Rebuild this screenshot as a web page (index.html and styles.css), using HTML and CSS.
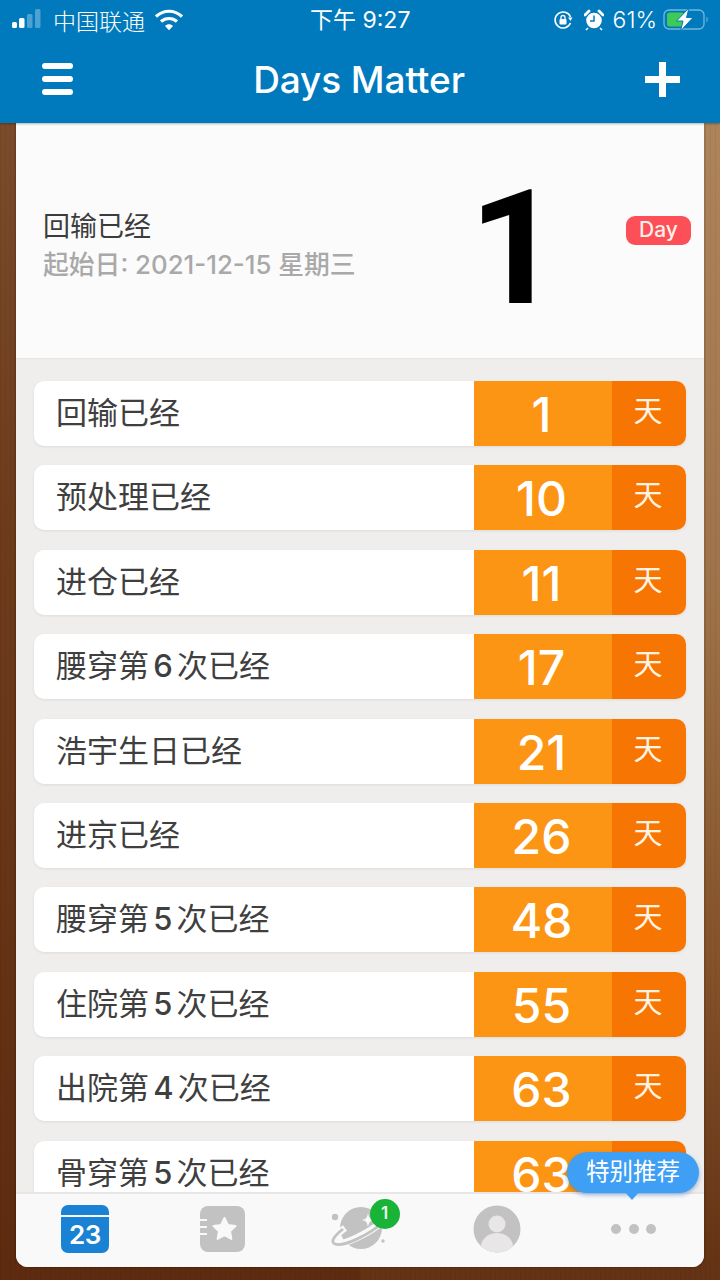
FILE: index.html
```html
<!DOCTYPE html>
<html lang="zh">
<head>
<meta charset="utf-8">
<title>Days Matter</title>
<link rel="stylesheet" href="styles.css">
</head>
<body>
<header class="top">
  <div class="status">
    <div class="status-left">
      <svg class="signal" width="34" height="24" viewBox="0 0 34 24"><rect x="0" y="14" width="5" height="6" rx="1.5" fill="#fff"/><rect x="7" y="10" width="5.5" height="10" rx="1.5" fill="#fff"/><rect x="15" y="6" width="5.5" height="14" rx="1.5" fill="#fff" opacity=".3"/><rect x="23" y="1" width="5.5" height="19" rx="1.5" fill="#fff" opacity=".3"/></svg>
      <span class="carrier">中国联通</span>
      <svg class="wifi" width="28" height="22" viewBox="0 0 28 22"><path d="M1 7.500C8.500 .5 19.500 .5 27 7.500" fill="none" stroke="#fff" stroke-width="3.2"/><path d="M6 12.500C10.500 8.500 17.500 8.500 22 12.500" fill="none" stroke="#fff" stroke-width="3.2"/><path d="M10 17c2.200-2.400 5.800-2.400 8 0l-4 4.200z" fill="#fff"/></svg>
    </div>
    <span class="clock">下午 9:27</span>
    <div class="status-right">
      <svg class="ic-lock" width="20" height="20" viewBox="0 0 20 20"><path d="M17.500 7A8 8 0 1 0 17.500 13" fill="none" stroke="#fff" stroke-width="1.600"/><path d="M15 7.500h4.500L17.500 11z" fill="#fff"/><rect x="6.500" y="9" width="7" height="5.500" rx="1" fill="#fff"/><path d="M8 9V7.500a2 2 0 0 1 4 0V9" fill="none" stroke="#fff" stroke-width="1.300"/></svg>
      <svg class="ic-alarm" width="20" height="22" viewBox="0 0 20 22"><circle cx="10" cy="11.500" r="7.800" fill="#fff"/><path d="M10 6.500v5.500H6" fill="none" stroke="#007abd" stroke-width="1.500"/><path d="M1 6l4-4M19 6l-4-4" stroke="#fff" stroke-width="2.800" stroke-linecap="round"/><path d="M4 19l-2 2M16 19l2 2" stroke="#fff" stroke-width="1.500"/></svg>
      <span class="percent">61%</span>
      <svg class="battery" width="46" height="24" viewBox="0 0 46 24"><rect x="1" y="2" width="40" height="19" rx="5" fill="none" stroke="#fff" stroke-opacity=".45" stroke-width="1.300"/><path d="M43.500 8.500c1.500.5 1.500 5.500 0 6z" fill="#fff" opacity=".45"/><rect x="4" y="4.500" width="17" height="14" rx="2.500" fill="#3ecb55"/><path d="M26 0L13.500 13H20l-2.500 10L30 9.500h-6.500z" fill="#fff" stroke="#007abd" stroke-width="1"/></svg>
    </div>
  </div>
  <nav class="nav">
    <div class="burger"><i></i><i></i><i></i></div>
    <h1 class="title">Days Matter</h1>
    <div class="plus"></div>
  </nav>
</header>

<main class="panel">
  <section class="hero">
    <div class="hero-text">
      <div class="hero-name">回输已经</div>
      <div class="hero-date">起始日: 2021-12-15 星期三</div>
    </div>
    <div class="hero-num">1</div>
    <div class="hero-tag">Day</div>
  </section>

  <section class="list">
    <div class="row"><span class="name">回输已经</span><span class="num">1</span><span class="unit">天</span></div>
    <div class="row"><span class="name">预处理已经</span><span class="num">10</span><span class="unit">天</span></div>
    <div class="row"><span class="name">进仓已经</span><span class="num">11</span><span class="unit">天</span></div>
    <div class="row"><span class="name">腰穿第 <b>6</b> 次已经</span><span class="num">17</span><span class="unit">天</span></div>
    <div class="row"><span class="name">浩宇生日已经</span><span class="num">21</span><span class="unit">天</span></div>
    <div class="row"><span class="name">进京已经</span><span class="num">26</span><span class="unit">天</span></div>
    <div class="row"><span class="name">腰穿第 <b>5</b> 次已经</span><span class="num">48</span><span class="unit">天</span></div>
    <div class="row"><span class="name">住院第 <b>5</b> 次已经</span><span class="num">55</span><span class="unit">天</span></div>
    <div class="row"><span class="name">出院第 <b>4</b> 次已经</span><span class="num">63</span><span class="unit">天</span></div>
    <div class="row"><span class="name">骨穿第 <b>5</b> 次已经</span><span class="num">63</span><span class="unit">天</span></div>
  </section>

  <footer class="tabs">
    <div class="tab tab-cal">
      <div class="cal"><div class="cal-head"></div><div class="cal-num">23</div></div>
    </div>
    <div class="tab">
      <svg width="48" height="48" viewBox="0 0 48 48"><rect x="1" y="1" width="45" height="46" rx="8" fill="#c2c2c2"/><path d="M0 15h8M0 22h8M0 29h8" stroke="#f9f9f9" stroke-width="2"/><path d="M25.500 13l3.400 7 7.600 1-5.500 5.300 1.400 7.600-6.900-3.700-6.900 3.700 1.400-7.600-5.500-5.300 7.600-1z" fill="#f9f9f9" stroke="#f9f9f9" stroke-width="2" stroke-linejoin="round"/></svg>
    </div>
    <div class="tab">
      <svg width="60" height="54" viewBox="0 0 60 54"><circle cx="5" cy="15" r="3.200" fill="#c2c2c2"/><circle cx="31" cy="26" r="21" fill="#c2c2c2"/><path d="M15 26C5 33 1 39 5 41c7 3 32-8 51-24" fill="none" stroke="#f9f9f9" stroke-width="7"/><path d="M13 27C4 34 0 40 5 42c8 3 33-8 51-24" fill="none" stroke="#c2c2c2" stroke-width="2.800"/><path d="M38 11c1 5 2 6 6 7-4 1-5 2-6 7-1-5-2-6-6-7 4-1 5-2 6-7z" fill="#f9f9f9"/><circle cx="53" cy="39" r="1.700" fill="#c2c2c2"/></svg>
      <span class="badge">1</span>
    </div>
    <div class="tab">
      <svg width="48" height="48" viewBox="0 0 48 48"><defs><clipPath id="avatar-clip"><circle cx="24" cy="24" r="23.500"/></clipPath></defs><circle cx="24" cy="24" r="23.500" fill="#c2c2c2"/><g clip-path="url(#avatar-clip)"><circle cx="24" cy="19" r="8.500" fill="#e8e6e6"/><ellipse cx="24" cy="42" rx="16" ry="14" fill="#e8e6e6"/></g></svg>
    </div>
    <div class="tab">
      <div class="dots"><i></i><i></i><i></i></div>
    </div>
  </footer>

  <div class="tip">特别推荐</div>
</main>
</body>
</html>
```

FILE: styles.css
```css
* { box-sizing: border-box; }

html, body { margin: 0; padding: 0; }

body {
  width: 720px;
  height: 1280px;
  overflow: hidden;
  font-family: "Inter", "Noto Sans CJK SC", sans-serif;
  background:
    repeating-linear-gradient(90deg, rgba(0, 0, 0, .05) 0 1px, transparent 1px 5px),
    linear-gradient(180deg, #80502f 0%, #6e3c1d 40%, #5e2b10 100%) left / 50% 100% no-repeat,
    linear-gradient(180deg, #b28860 0%, #a0744a 45%, #85522a 75%, #643214 100%) right / 50% 100% no-repeat;
}

.top {
  height: 123px;
  background: #007abd;
  color: #fff;
  box-shadow: 0 1px 2px rgba(0, 0, 0, .3);
  position: relative;
  z-index: 2;
}

.status {
  height: 42px;
  display: flex;
  align-items: center;
  justify-content: space-between;
  padding: 0 11px 2px 12px;
  position: relative;
}

.status-left, .status-right { display: flex; align-items: center; }

.carrier { font-size: 23px; margin-left: 7px; font-weight: 300; }

.wifi { margin-left: 10px; }

.clock {
  position: absolute;
  left: 310px;
  top: 5px;
  font-size: 23px;
  line-height: 30px;
}

.ic-alarm { margin-left: 11px; }

.percent { font-size: 23px; font-weight: 300; margin-left: 9px; }

.battery { margin-left: 6px; }

.nav {
  height: 81px;
  display: flex;
  align-items: center;
  justify-content: space-between;
  padding: 0 40px 7px 42px;
}

.burger { display: flex; flex-direction: column; gap: 7px; width: 31px; }

.burger i { display: block; height: 6px; border-radius: 3px; background: #fff; }

.title {
  margin: 0;
  font-size: 37px;
  font-weight: 500;
  letter-spacing: -.1px;
}

.plus {
  width: 35px;
  height: 35px;
  border-radius: 3px;
  background:
    linear-gradient(#fff, #fff) center / 35px 7px no-repeat,
    linear-gradient(#fff, #fff) center / 7px 35px no-repeat;
}

.panel {
  width: 688px;
  height: 1144px;
  margin-left: 16px;
  position: relative;
  background: #f0eeed;
  border-radius: 0 0 12px 12px;
  overflow: hidden;
  display: flex;
  flex-direction: column;
  box-shadow: 0 0 3px rgba(0, 0, 0, .35);
}

.hero {
  height: 236px;
  flex: none;
  background: #fbfbfb;
  border-bottom: 1px solid #e8e6e5;
  display: flex;
  align-items: center;
  position: relative;
}

.hero-text { margin: 10px 0 0 27px; width: 400px; }

.hero-name { font-size: 27px; line-height: 36px; color: #3c3c3c; }

.hero-date { font-size: 25.800px; line-height: 36px; color: #a9a9a9; font-weight: 500; margin-top: 2px; }

.hero-num {
  position: absolute;
  left: 453px;
  top: 44px;
  font-family: "Roboto", sans-serif;
  font-weight: 700;
  font-size: 160px;
  line-height: 164px;
  color: #000;
}

.hero-tag {
  position: absolute;
  left: 610px;
  top: 93px;
  width: 65px;
  height: 29px;
  border-radius: 9px;
  background: #fd4f57;
  color: #fdf0e8;
  font-size: 21px;
  font-weight: 500;
  line-height: 28px;
  text-align: center;
}

.list {
  flex: 1;
  min-height: 0;
  overflow: hidden;
  padding: 22px 18px 0;
  display: flex;
  flex-direction: column;
  gap: 19.4px;
}

.row {
  flex: none;
  height: 65px;
  display: flex;
  border-radius: 10px;
  overflow: hidden;
  background: #fff;
  box-shadow: 0 1px 3px rgba(0, 0, 0, .08);
}

.name {
  width: 440px;
  padding-left: 22px;
  font-size: 31px;
  line-height: 64px;
  color: #3f3f3f;
  word-spacing: -4.500px;
}

.name b { font-weight: 500; }

.num {
  width: 138px;
  padding-right: 3px;
  background: #fc9514;
  color: #fff;
  font-size: 48px;
  font-weight: 550;
  line-height: 67px;
  text-align: center;
}

.unit {
  width: 74px;
  padding-right: 2px;
  background: #f77502;
  color: #fff4e4;
  font-size: 29px;
  line-height: 62px;
  text-align: center;
}

.tabs {
  height: 75px;
  flex: none;
  background: #f9f9f9;
  border-top: 2px solid #e8e6e6;
  display: grid;
  grid-template-columns: repeat(5, 1fr);
  padding: 0 2px;
  position: relative;
}

.tab {
  position: relative;
  display: flex;
  align-items: center;
  justify-content: center;
  padding-bottom: 3px;
}

.tab-cal { padding-right: 3px; }

.cal {
  width: 48px;
  height: 48px;
  border-radius: 7px;
  overflow: hidden;
  background: #1a82d4;
}

.cal-head { height: 12px; border-bottom: 2px solid #f9f9f9; }

.cal-num {
  color: #fff;
  font-size: 26px;
  font-weight: 600;
  line-height: 36px;
  text-align: center;
  letter-spacing: -.5px;
}

.badge {
  position: absolute;
  left: 78px;
  top: 5px;
  width: 30px;
  height: 30px;
  border-radius: 50%;
  background: #18b337;
  color: #e8f7e8;
  font-size: 17px;
  font-weight: 600;
  line-height: 29px;
  text-align: center;
}

.dots { display: flex; gap: 7.500px; }

.dots i { display: block; width: 10px; height: 10px; border-radius: 50%; background: #c2c2c2; }

.tip {
  position: absolute;
  left: 551px;
  top: 1029px;
  width: 132px;
  height: 41px;
  border-radius: 21px;
  background: #3f9ff5;
  color: #fff;
  font-size: 23.500px;
  line-height: 40px;
  text-align: center;
  box-shadow: 0 2px 4px rgba(30, 100, 180, .45);
  z-index: 3;
}

.tip::after {
  content: "";
  position: absolute;
  left: 57px;
  top: 39px;
  border-left: 8px solid transparent;
  border-right: 8px solid transparent;
  border-top: 9px solid #3f9ff5;
}
```
